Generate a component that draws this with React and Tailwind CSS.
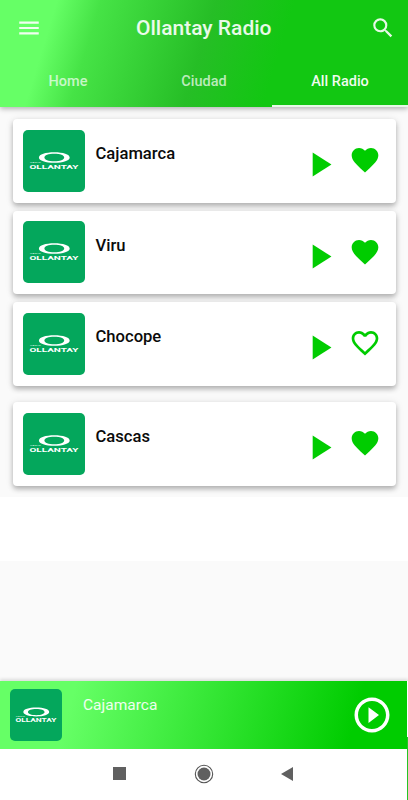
import { MdFavorite, MdFavoriteBorder, MdMenu, MdPlayArrow, MdPlayCircleOutline, MdSearch } from 'react-icons/md';

const TABS = ['Home', 'Ciudad', 'All Radio'];

const STATIONS = [
    { name: 'Cajamarca', favorite: true, spacing: 'mt-[12.5px]' },
    { name: 'Viru', favorite: true, spacing: 'mt-[8px]' },
    { name: 'Chocope', favorite: false, spacing: 'mt-[8px]' },
    { name: 'Cascas', favorite: true, spacing: 'mt-[16.5px]' },
];

function Logo({ className }) {
    return (
        <svg viewBox="0 0 62 62" className={`shrink-0 bg-[#04a75c] ${className}`}>
            <path
                fillRule="evenodd"
                fill="#fff"
                d="M31.3 22.2c8.8 0 15.4 2.1 15.4 5.3s-6.6 5.3-15.4 5.3-15.4-2.1-15.4-5.3 6.6-5.3 15.4-5.3zm0 1.6c-5.9 0-9.9 1.4-9.9 3.7s4 3.7 9.9 3.7 9.9-1.4 9.9-3.7-4-3.7-9.9-3.7z"
            />
            <text x="7" y="32.8" fontSize="1.9" textLength="11" lengthAdjust="spacingAndGlyphs" fill="#c5ead7">RADIO</text>
            <text x="6.5" y="39" fontSize="6" fontWeight="700" textLength="49" lengthAdjust="spacingAndGlyphs" fill="#fff">OLLANTAY</text>
        </svg>
    );
}

function StationCard({ station }) {
    const Heart = station.favorite ? MdFavorite : MdFavoriteBorder;

    return (
        <div className={`mx-[12.5px] flex h-[83.5px] rounded-[4px] bg-white pl-[10.5px] pt-[10.5px] shadow-[0_3px_5px_rgba(0,0,0,0.25),0_1px_8px_rgba(0,0,0,0.1)] ${station.spacing}`}>
            <Logo className="size-[62px] rounded-[5px]" />
            <h2 className="ml-[10.5px] mt-[12.5px] text-[16.6px] font-medium leading-6 text-[#0b0b0b]">{station.name}</h2>
            <button className="ml-auto mt-[14.5px] size-[41px]">
                <MdPlayArrow size={41} color="#00cc00" />
            </button>
            <button className="ml-[9px] mr-[14.5px] mt-[14.5px] size-[32px]">
                <Heart size={32} color="#00cc00" />
            </button>
        </div>
    );
}

export default function App() {
    return (
        <div className="flex h-[800px] w-[408px] flex-col overflow-hidden bg-[#fafafa] font-[Roboto,sans-serif]">
            <header className="relative z-10 h-[106.5px] shrink-0 bg-[linear-gradient(107deg,#66ff66_13%,#46e346_23%,#26be26_49%,#12c712_67%)] shadow-[0_2px_5px_rgba(0,0,0,0.28)]">
                <div className="grid h-[56px] grid-cols-[1fr_auto_1fr] items-center pl-[16px] pr-[12.5px]">
                    <MdMenu size={26} className="text-white/90" />
                    <h1 className="-ml-1 pt-px text-[21px] font-medium text-white/90">Ollantay Radio</h1>
                    <MdSearch size={26} className="mb-px justify-self-end text-white/90" />
                </div>
                <nav className="grid h-[50.5px] grid-cols-3">
                    {TABS.map(tab => (
                        <button
                            key={tab}
                            className={`border-b-[2.5px] pt-[3px] text-[14.5px] font-medium ${
                                tab === 'All Radio' ? 'border-white/90 text-white/95' : 'border-transparent text-white/70'
                            }`}
                        >
                            {tab}
                        </button>
                    ))}
                </nav>
            </header>

            {/* Station list */}
            <main className="flex-1">
                <div className="flow-root h-[390.5px] overflow-hidden">
                    {STATIONS.map(station => (
                        <StationCard key={station.name} station={station} />
                    ))}
                </div>
                <div className="h-[64px] bg-white" />
            </main>

            {/* Mini player */}
            <footer className="flex h-[68px] shrink-0 border-r border-white bg-[linear-gradient(105deg,#66ff66_18%,#00cc00_86%)] pl-[10px] pt-[8px] shadow-[0_-2px_3px_rgba(0,0,0,0.12)]">
                <Logo className="size-[52px] rounded-[5px]" />
                <p className="ml-[21px] mt-[3.5px] text-[15.5px] leading-6 text-white/90">Cajamarca</p>
                <button className="ml-auto mr-[14px] mt-[5px] size-[42px]">
                    <MdPlayCircleOutline size={42} color="#fff" />
                </button>
            </footer>

            {/* System navigation */}
            <div className="relative flex h-[51px] shrink-0 items-center bg-white pb-[2px]">
                <span className="ml-[113px] size-[12.5px] bg-[#606060]" />
                <svg viewBox="0 0 20 20" className="ml-[68.5px] size-5">
                    <circle cx="10" cy="10" r="8.7" fill="none" stroke="#555" strokeWidth="1.1" />
                    <circle cx="10" cy="10" r="6.5" fill="#606060" />
                </svg>
                <svg viewBox="0 0 12 14" className="ml-[67px] h-[14px] w-[12px]">
                    <path d="M12 0v14L0 7z" fill="#606060" />
                </svg>
                <span className="absolute -top-[12px] right-0 h-[63px] w-px bg-[#24c524]" />
            </div>
        </div>
    );
}
